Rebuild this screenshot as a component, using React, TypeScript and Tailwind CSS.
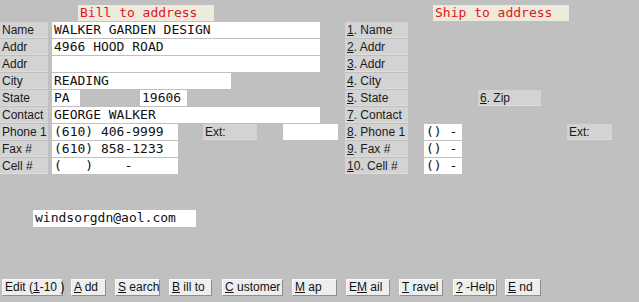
import React from "react";

const mono = { fontFamily: '"DejaVu Sans Mono", "Liberation Mono", monospace' };

function Label({ w, children, className = "" }: { w: string; children: React.ReactNode; className?: string }) {
  return (
    <div className={`${w} h-[16px] leading-[16px] bg-[#d3d3d3] border-b border-[#dcdcdc] pl-[2px] text-[12px] text-[#1a1a1a] whitespace-nowrap ${className}`}>
      {children}
    </div>
  );
}

function Field({ w, children, className = "" }: { w: string; children?: React.ReactNode; className?: string }) {
  return (
    <div
      className={`${w} h-[16px] leading-[16px] bg-white pl-[2px] text-[13px] text-[#111] whitespace-pre overflow-hidden ${className}`}
      style={mono}
    >
      {children}
    </div>
  );
}

function Row({ left, right }: { left: React.ReactNode; right?: React.ReactNode }) {
  return (
    <div className="flex h-[17px] items-start">
      <div className="w-[345px] flex items-start shrink-0">{left}</div>
      <div className="flex items-start">{right}</div>
    </div>
  );
}

function RLabel({ n, text }: { n: string; text: string }) {
  return (
    <Label w="w-[63px]" className="pl-[1px]">
      <u>{n[0]}</u>
      {n.slice(1)}. {text}
    </Label>
  );
}

function Btn({ pre = "", u, rest, w }: { pre?: string; u: string; rest: string; w: string }) {
  return (
    <div className={`${w} h-[17px] leading-[15px] bg-[#eeeeee] border border-t-[#fafafa] border-l-[#fafafa] border-b-[#8e8e8e] border-r-[#8e8e8e] pl-[2px] text-[12px] text-[#111] whitespace-pre`}>
      {pre}
      <u>{u}</u>
      {rest}
    </div>
  );
}

export default function App() {
  return (
    <div
      className="w-[639px] h-[302px] bg-[#c0c0c0] overflow-hidden flex flex-col"
      style={{ fontFamily: '"Liberation Sans", Arial, sans-serif' }}
    >
      {/* titles */}
      <div className="flex mt-[5px] h-[17px]">
        <div
          className="ml-[78px] w-[136px] h-[16px] leading-[16px] bg-[#ecebdc] text-[#e3141c] text-[13px] pl-[2px]"
          style={mono}
        >
          Bill to address
        </div>
        <div
          className="ml-[219px] w-[136px] h-[16px] leading-[16px] bg-[#ecebdc] text-[#e3141c] text-[13px] pl-[2px]"
          style={mono}
        >
          Ship to address
        </div>
      </div>

      <Row
        left={
          <>
            <Label w="w-[48px]">Name</Label>
            <Field w="w-[268px] ml-[4px]">WALKER GARDEN DESIGN</Field>
          </>
        }
        right={<RLabel n="1" text="Name" />}
      />
      <Row
        left={
          <>
            <Label w="w-[48px]">Addr</Label>
            <Field w="w-[268px] ml-[4px]">4966 HOOD ROAD</Field>
          </>
        }
        right={<RLabel n="2" text="Addr" />}
      />
      <Row
        left={
          <>
            <Label w="w-[48px]">Addr</Label>
            <Field w="w-[268px] ml-[4px]"></Field>
          </>
        }
        right={<RLabel n="3" text="Addr" />}
      />
      <Row
        left={
          <>
            <Label w="w-[48px]">City</Label>
            <Field w="w-[179px] ml-[4px]">READING</Field>
          </>
        }
        right={<RLabel n="4" text="City" />}
      />
      <Row
        left={
          <>
            <Label w="w-[48px]">State</Label>
            <Field w="w-[28px] ml-[4px]">PA</Field>
            <Field w="w-[47px] ml-[60px]">19606</Field>
          </>
        }
        right={
          <>
            <RLabel n="5" text="State" />
            <Label w="w-[63px] ml-[70px]">
              <u>6</u>. Zip
            </Label>
          </>
        }
      />
      <Row
        left={
          <>
            <Label w="w-[48px]">Contact</Label>
            <Field w="w-[268px] ml-[4px]">GEORGE WALKER</Field>
          </>
        }
        right={<RLabel n="7" text="Contact" />}
      />
      <Row
        left={
          <>
            <Label w="w-[48px]">Phone 1</Label>
            <Field w="w-[126px] ml-[4px]">(610) 406-9999</Field>
            <Label w="w-[54px] ml-[25px]" className="pl-[1px]">Ext:</Label>
            <Field w="w-[55px] ml-[26px]"></Field>
          </>
        }
        right={
          <>
            <RLabel n="8" text="Phone 1" />
            <Field w="w-[38px] ml-[16px]">() -</Field>
            <Label w="w-[45px] ml-[105px]" className="pl-[1px]">Ext:</Label>
          </>
        }
      />
      <Row
        left={
          <>
            <Label w="w-[48px]">Fax #</Label>
            <Field w="w-[126px] ml-[4px]">(610) 858-1233</Field>
          </>
        }
        right={
          <>
            <RLabel n="9" text="Fax #" />
            <Field w="w-[38px] ml-[16px]">() -</Field>
          </>
        }
      />
      <Row
        left={
          <>
            <Label w="w-[48px]">Cell #</Label>
            <Field w="w-[126px] ml-[4px]">{"(   )    -"}</Field>
          </>
        }
        right={
          <>
            <RLabel n="10" text="Cell #" />
            <Field w="w-[38px] ml-[16px]">() -</Field>
          </>
        }
      />

      {/* email */}
      <div className="mt-[35px] flex">
        <Field w="w-[163px] ml-[33px] h-[17px]">windsorgdn@aol.com</Field>
      </div>

      {/* buttons */}
      <div className="mt-[52px] flex items-start">
        <Btn w="w-[61px] ml-[2px]" pre="Edit (" u="1" rest="-10 )" />
        <Btn w="w-[35px] ml-[8px]" u="A" rest=" dd" />
        <Btn w="w-[45px] ml-[9px]" u="S" rest=" earch" />
        <Btn w="w-[43px] ml-[9px]" u="B" rest=" ill to" />
        <Btn w="w-[61px] ml-[10px]" u="C" rest=" ustomer" />
        <Btn w="w-[45px] ml-[9px]" u="M" rest=" ap" />
        <Btn w="w-[44px] ml-[9px]" pre="E" u="M" rest=" ail" />
        <Btn w="w-[44px] ml-[9px]" u="T" rest=" ravel" />
        <Btn w="w-[44px] ml-[10px]" u="?" rest=" -Help" />
        <Btn w="w-[36px] ml-[8px]" u="E" rest=" nd" />
      </div>
    </div>
  );
}
